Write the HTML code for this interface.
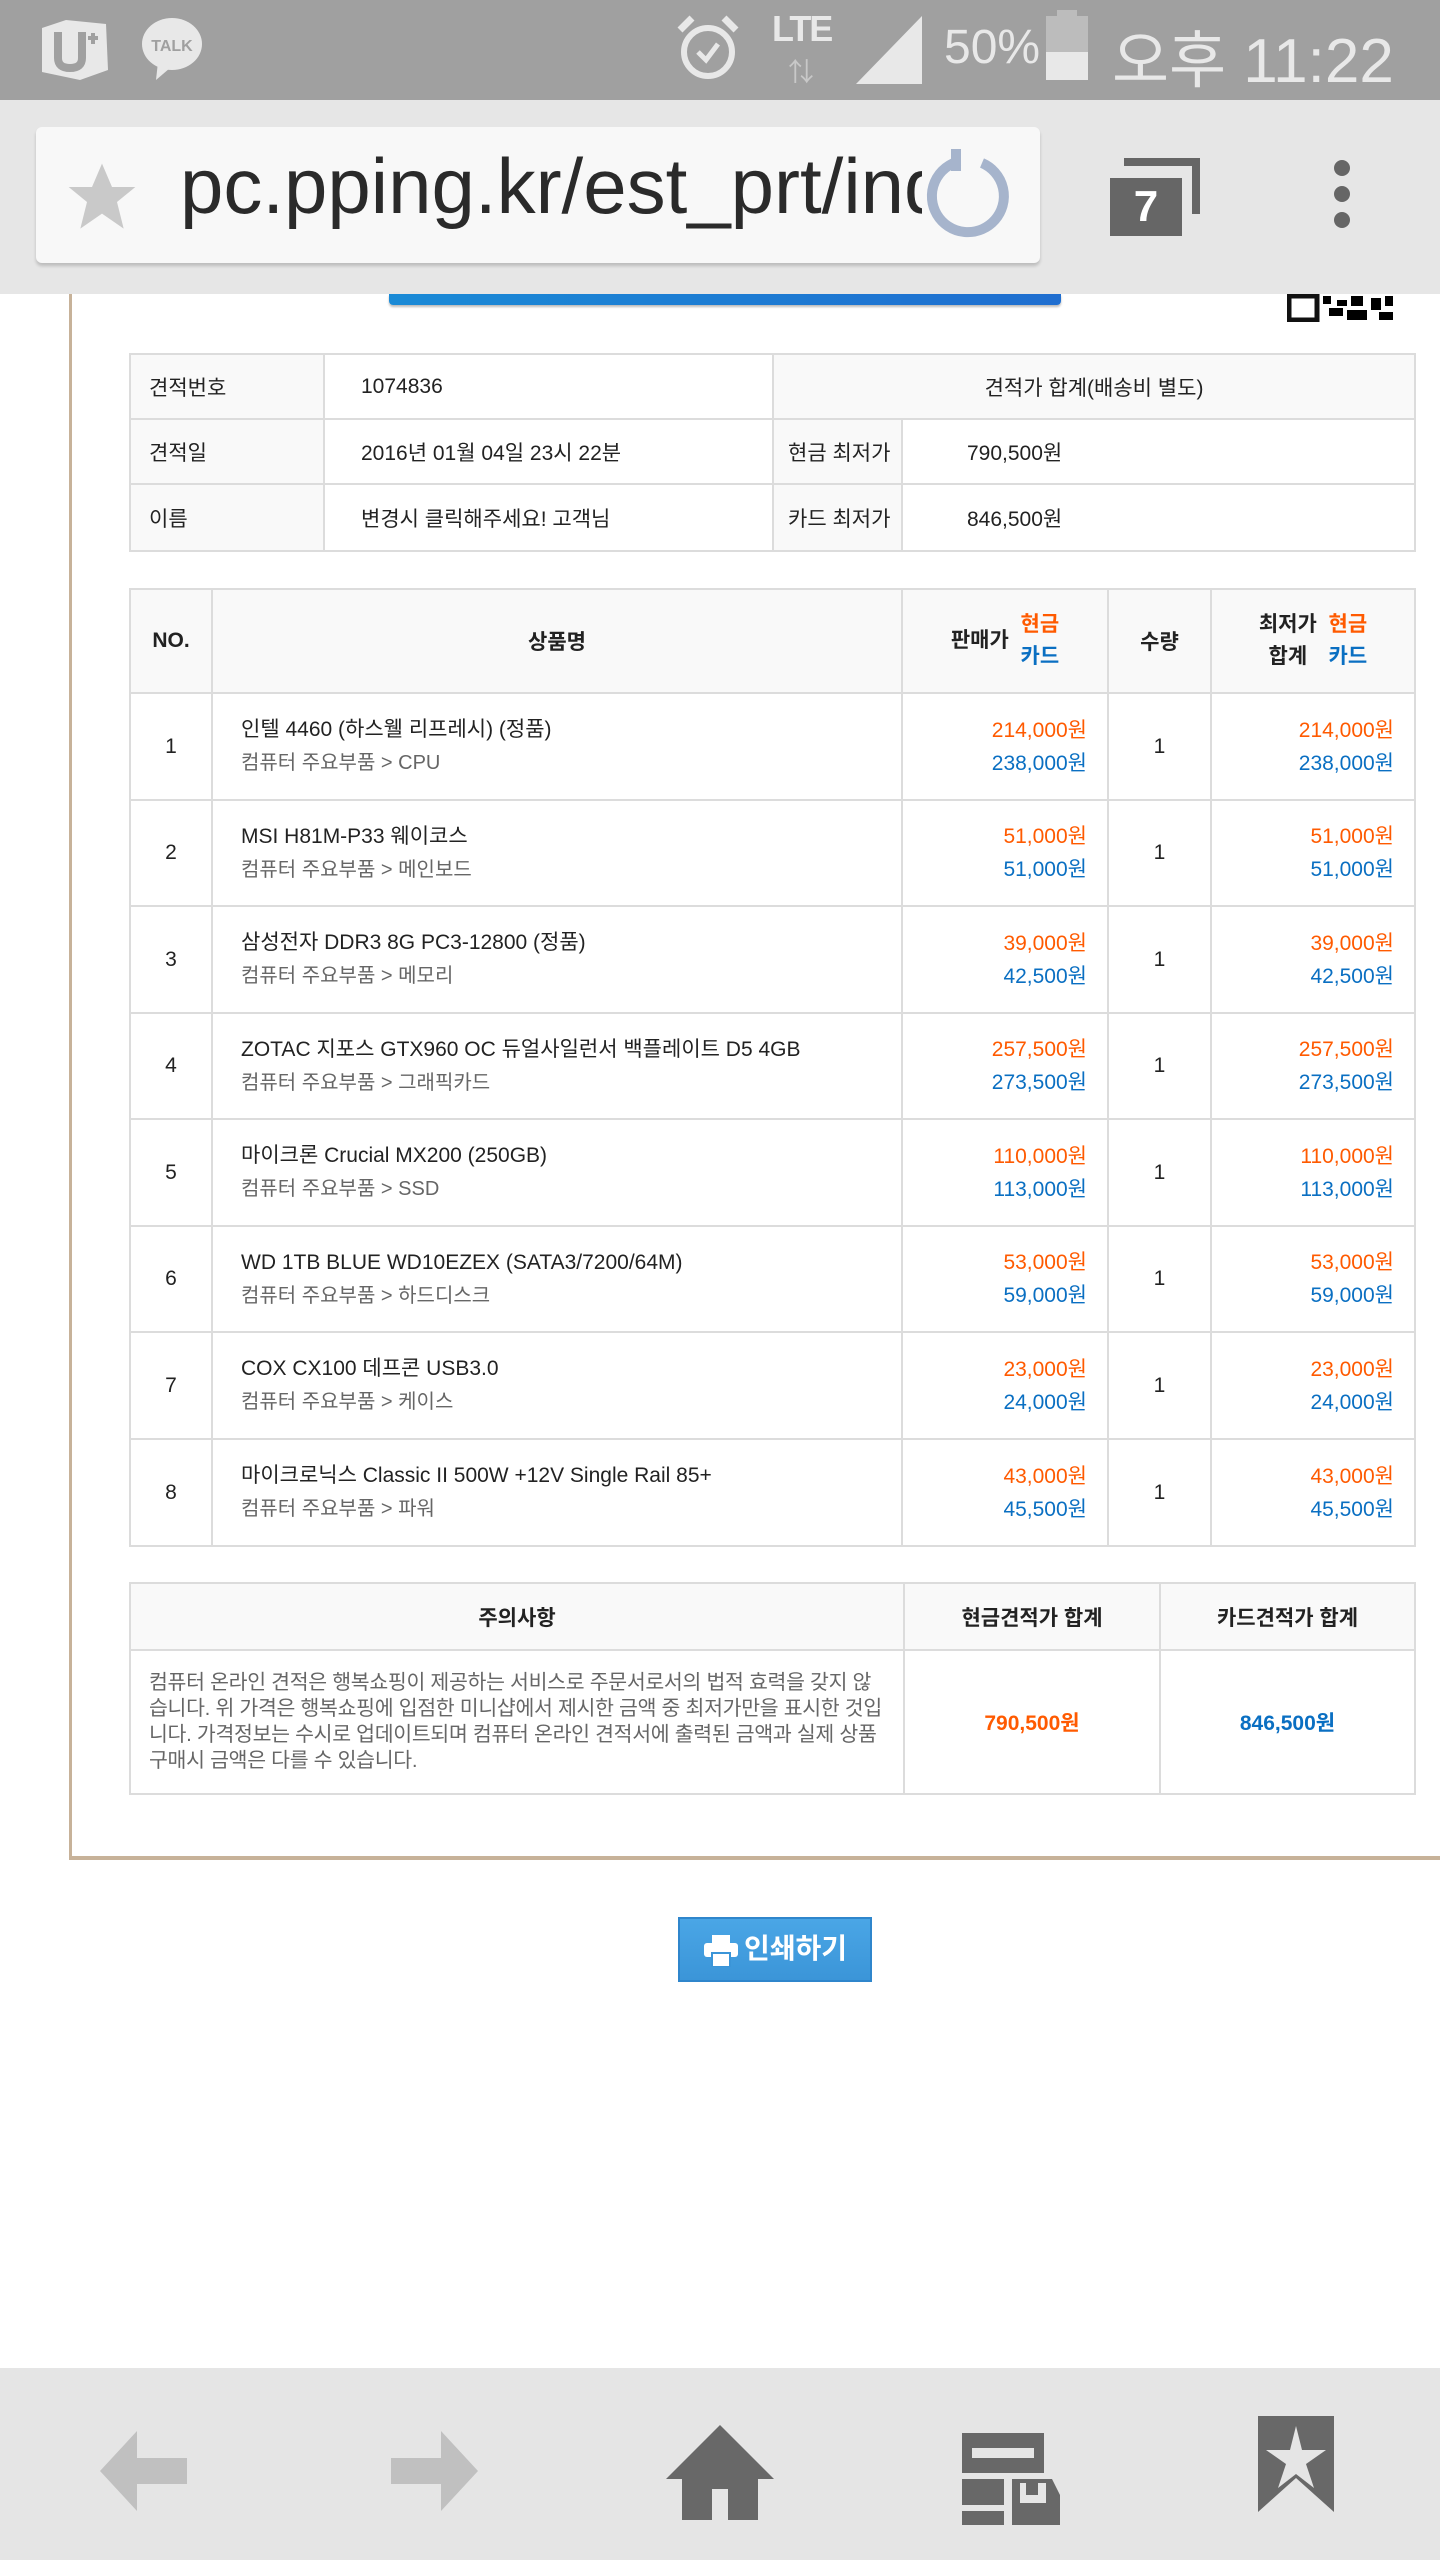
<!DOCTYPE html>
<html><head><meta charset="utf-8">
<style>
*{margin:0;padding:0;box-sizing:border-box}
body{width:1440px;height:2560px;position:relative;background:#fff;font-family:"Liberation Sans","Noto Sans CJK KR",sans-serif;overflow:hidden;color:#222}
.abs{position:absolute}
#status{left:0;top:0;width:1440px;height:100px;background:#a0a0a0}
#tool{left:0;top:100px;width:1440px;height:194px;background:#e6e6e6}
#url{left:36px;top:127px;width:1004px;height:136px;background:#f8f8f8;border-radius:6px;box-shadow:0 3px 3px rgba(0,0,0,.18)}
table{border-collapse:collapse;position:absolute;table-layout:fixed}
td{border:2px solid #dcdcdc;font-size:21px;color:#222}
.h{background:#f9f9f9}
.o{color:#ff5a00}.b{color:#0a6fc2}
.r{text-align:right;padding-right:20px}
.c{text-align:center}
.cat{color:#666;font-size:20px}
</style></head><body>
<div id="status" class="abs">
 <svg class="abs" style="left:36px;top:14px" width="80" height="70" viewBox="0 0 80 70"><path d="M6 14 L30 6 L70 10 L72 56 L44 66 L6 58Z" fill="#e8e8e8"/><path d="M22 18 V44 Q22 54 34 54 Q46 54 46 44 V18" stroke="#a0a0a0" stroke-width="8" fill="none"/><path d="M52 24 H62 M57 19 V30" stroke="#a0a0a0" stroke-width="4"/></svg>
 <svg class="abs" style="left:138px;top:16px" width="70" height="70" viewBox="0 0 70 70"><ellipse cx="34" cy="28" rx="30" ry="26" fill="#e8e8e8"/><path d="M20 46 L18 64 L32 52Z" fill="#e8e8e8"/><text x="34" y="35" font-size="16" font-weight="bold" fill="#a0a0a0" text-anchor="middle" font-family="Liberation Sans">TALK</text></svg>
 <svg class="abs" style="left:676px;top:14px" width="64" height="70" viewBox="0 0 64 70"><circle cx="32" cy="38" r="24" stroke="#e8e8e8" stroke-width="6" fill="none"/><path d="M4 16 L16 4 M60 16 L48 4" stroke="#e8e8e8" stroke-width="7"/><path d="M22 38 L30 46 L42 30" stroke="#e8e8e8" stroke-width="5" fill="none"/></svg>
 <div class="abs" style="left:772px;top:8px;font-size:36px;font-weight:bold;color:#e8e8e8;letter-spacing:-2px">LTE</div>
 <div class="abs" style="left:788px;top:52px;font-size:26px;color:#c8c8c8">⇅</div>
 <svg class="abs" style="left:856px;top:16px" width="66" height="68"><path d="M0 68 L66 0 V68Z" fill="#e8e8e8"/></svg>
 <div class="abs" style="left:944px;top:20px;font-size:48px;color:#e8e8e8">50%</div>
 <div class="abs" style="left:1046px;top:16px;width:42px;height:64px;background:#bcbcbc"></div>
 <div class="abs" style="left:1057px;top:10px;width:20px;height:8px;background:#bcbcbc"></div>
 <div class="abs" style="left:1046px;top:52px;width:42px;height:28px;background:#e8e8e8"></div>
 <div class="abs" style="left:1112px;top:10px;font-size:62px;color:#e8e8e8">오후 11:22</div>
</div>
<div id="tool" class="abs">
 <div id="url" class="abs" style="top:27px">
  <svg class="abs" style="left:26px;top:30px" width="80" height="80" viewBox="0 0 24 24"><path d="M12 2l3 7h7l-5.5 4.5 2 8L12 17l-6.5 4.5 2-8L2 9h7z" fill="#c9c9c9"/></svg>
  <div class="abs" style="left:144px;top:14px;font-size:78px;color:#2a2a2a;white-space:nowrap;width:742px;overflow:hidden">pc.pping.kr/est_prt/index</div>
  <svg class="abs" style="left:884px;top:20px" width="96" height="100" viewBox="0 0 96 100"><path d="M40 14 A36 36 0 1 0 62 16" stroke="#a6b4cc" stroke-width="10" fill="none"/><path d="M36 2 V24" stroke="#a6b4cc" stroke-width="10"/></svg>
 </div>
 <div class="abs" style="left:1124px;top:58px;width:76px;height:56px;border-top:8px solid #666;border-right:8px solid #666"></div>
 <div class="abs" style="left:1110px;top:78px;width:72px;height:58px;background:#666;color:#fff;font-size:44px;font-weight:bold;text-align:center;line-height:58px">7</div>
 <div class="abs" style="left:1334px;top:60px;width:16px;height:16px;border-radius:50%;background:#666"></div>
 <div class="abs" style="left:1334px;top:86px;width:16px;height:16px;border-radius:50%;background:#666"></div>
 <div class="abs" style="left:1334px;top:112px;width:16px;height:16px;border-radius:50%;background:#666"></div>
</div>
<div class="abs" style="left:389px;top:294px;width:672px;height:11px;background:linear-gradient(90deg,#1a8ad6,#1f6ed0);border-radius:0 0 4px 4px;box-shadow:0 2px 2px #bbb"></div>
<svg class="abs" style="left:1287px;top:294px" width="110" height="28"><rect x="2" y="2" width="28" height="24" fill="none" stroke="#111" stroke-width="5"/><rect x="36" y="2" width="8" height="8"/><rect x="50" y="6" width="10" height="6"/><rect x="42" y="14" width="14" height="8"/><rect x="64" y="2" width="12" height="10"/><rect x="60" y="16" width="20" height="10"/><rect x="84" y="4" width="10" height="12"/><rect x="92" y="18" width="14" height="8"/><rect x="98" y="2" width="8" height="10"/></svg>
<div class="abs" style="left:69px;top:294px;width:3px;height:1566px;background:#c7b299"></div>
<div class="abs" style="left:69px;top:1856px;width:1371px;height:4px;background:#c7b299"></div>

<table style="left:129px;top:353px;width:1285px">
<colgroup><col style="width:194px"><col style="width:449px"><col style="width:129px"><col style="width:513px"></colgroup>
<tr style="height:65px"><td class="h" style="padding-left:18px">견적번호</td><td style="padding-left:36px">1074836</td><td class="h c" colspan="2">견적가 합계(배송비 별도)</td></tr>
<tr style="height:65px"><td class="h" style="padding-left:18px">견적일</td><td style="padding-left:36px">2016년 01월 04일 23시 22분</td><td class="h" style="padding-left:14px">현금 최저가</td><td style="padding-left:64px">790,500원</td></tr>
<tr style="height:67px"><td class="h" style="padding-left:18px">이름</td><td style="padding-left:36px">변경시 클릭해주세요! 고객님</td><td class="h" style="padding-left:14px">카드 최저가</td><td style="padding-left:64px">846,500원</td></tr>
</table>

<table style="left:129px;top:588px;width:1285px">
<colgroup><col style="width:82px"><col style="width:690px"><col style="width:206px"><col style="width:103px"><col style="width:204px"></colgroup>
<tr style="height:104px" class="h">
<td class="h c" style="font-weight:bold">NO.</td><td class="h c" style="font-weight:bold">상품명</td>
<td class="h c" style="font-weight:bold;line-height:32px"><span style="vertical-align:middle">판매가&nbsp;&nbsp;</span><span style="display:inline-block;vertical-align:middle"><span class="o">현금</span><br><span class="b">카드</span></span></td>
<td class="h c" style="font-weight:bold">수량</td>
<td class="h c" style="font-weight:bold;line-height:32px"><span style="display:inline-block;vertical-align:middle">최저가<br>합계</span>&nbsp;&nbsp;<span style="display:inline-block;vertical-align:middle"><span class="o">현금</span><br><span class="b">카드</span></span></td>
</tr>
<tr style="height:107px"><td class="c">1</td><td style="padding-left:28px;line-height:33px">인텔 4460 (하스웰 리프레시) (정품)<br><span class="cat">컴퓨터 주요부품 &gt; CPU</span></td><td class="r" style="line-height:33px"><span class="o">214,000원</span><br><span class="b">238,000원</span></td><td class="c">1</td><td class="r" style="line-height:33px"><span class="o">214,000원</span><br><span class="b">238,000원</span></td></tr>
<tr style="height:106px"><td class="c">2</td><td style="padding-left:28px;line-height:33px">MSI H81M-P33 웨이코스<br><span class="cat">컴퓨터 주요부품 &gt; 메인보드</span></td><td class="r" style="line-height:33px"><span class="o">51,000원</span><br><span class="b">51,000원</span></td><td class="c">1</td><td class="r" style="line-height:33px"><span class="o">51,000원</span><br><span class="b">51,000원</span></td></tr>
<tr style="height:107px"><td class="c">3</td><td style="padding-left:28px;line-height:33px">삼성전자 DDR3 8G PC3-12800 (정품)<br><span class="cat">컴퓨터 주요부품 &gt; 메모리</span></td><td class="r" style="line-height:33px"><span class="o">39,000원</span><br><span class="b">42,500원</span></td><td class="c">1</td><td class="r" style="line-height:33px"><span class="o">39,000원</span><br><span class="b">42,500원</span></td></tr>
<tr style="height:106px"><td class="c">4</td><td style="padding-left:28px;line-height:33px">ZOTAC 지포스 GTX960 OC 듀얼사일런서 백플레이트 D5 4GB<br><span class="cat">컴퓨터 주요부품 &gt; 그래픽카드</span></td><td class="r" style="line-height:33px"><span class="o">257,500원</span><br><span class="b">273,500원</span></td><td class="c">1</td><td class="r" style="line-height:33px"><span class="o">257,500원</span><br><span class="b">273,500원</span></td></tr>
<tr style="height:107px"><td class="c">5</td><td style="padding-left:28px;line-height:33px">마이크론 Crucial MX200 (250GB)<br><span class="cat">컴퓨터 주요부품 &gt; SSD</span></td><td class="r" style="line-height:33px"><span class="o">110,000원</span><br><span class="b">113,000원</span></td><td class="c">1</td><td class="r" style="line-height:33px"><span class="o">110,000원</span><br><span class="b">113,000원</span></td></tr>
<tr style="height:106px"><td class="c">6</td><td style="padding-left:28px;line-height:33px">WD 1TB BLUE WD10EZEX (SATA3/7200/64M)<br><span class="cat">컴퓨터 주요부품 &gt; 하드디스크</span></td><td class="r" style="line-height:33px"><span class="o">53,000원</span><br><span class="b">59,000원</span></td><td class="c">1</td><td class="r" style="line-height:33px"><span class="o">53,000원</span><br><span class="b">59,000원</span></td></tr>
<tr style="height:107px"><td class="c">7</td><td style="padding-left:28px;line-height:33px">COX CX100 데프콘 USB3.0<br><span class="cat">컴퓨터 주요부품 &gt; 케이스</span></td><td class="r" style="line-height:33px"><span class="o">23,000원</span><br><span class="b">24,000원</span></td><td class="c">1</td><td class="r" style="line-height:33px"><span class="o">23,000원</span><br><span class="b">24,000원</span></td></tr>
<tr style="height:107px"><td class="c">8</td><td style="padding-left:28px;line-height:33px">마이크로닉스 Classic II 500W +12V Single Rail 85+<br><span class="cat">컴퓨터 주요부품 &gt; 파워</span></td><td class="r" style="line-height:33px"><span class="o">43,000원</span><br><span class="b">45,500원</span></td><td class="c">1</td><td class="r" style="line-height:33px"><span class="o">43,000원</span><br><span class="b">45,500원</span></td></tr>
</table>

<table style="left:129px;top:1582px;width:1285px">
<colgroup><col style="width:774px"><col style="width:256px"><col style="width:255px"></colgroup>
<tr style="height:67px"><td class="h c" style="font-weight:bold">주의사항</td><td class="h c" style="font-weight:bold">현금견적가 합계</td><td class="h c" style="font-weight:bold">카드견적가 합계</td></tr>
<tr style="height:144px"><td style="padding:0 18px;font-size:20.5px;color:#666;line-height:26px;letter-spacing:-0.3px">컴퓨터 온라인 견적은 행복쇼핑이 제공하는 서비스로 주문서로서의 법적 효력을 갖지 않습니다. 위 가격은 행복쇼핑에 입점한 미니샵에서 제시한 금액 중 최저가만을 표시한 것입니다. 가격정보는 수시로 업데이트되며 컴퓨터 온라인 견적서에 출력된 금액과 실제 상품 구매시 금액은 다를 수 있습니다.</td><td class="c o" style="font-weight:bold">790,500원</td><td class="c b" style="font-weight:bold">846,500원</td></tr>
</table>

<div class="abs" style="left:678px;top:1917px;width:194px;height:65px;background:linear-gradient(#4aa6e6,#3b95d8);border:2px solid #2f86cc;color:#fff;font-size:28px;font-weight:bold;line-height:60px;padding-left:64px">인쇄하기</div>
<svg class="abs" style="left:704px;top:1935px" width="34" height="32" viewBox="0 0 34 32"><rect x="8" y="0" width="18" height="8" fill="#fff"/><rect x="0" y="8" width="34" height="14" rx="3" fill="#fff"/><rect x="8" y="18" width="18" height="14" fill="#fff" stroke="#3b95d8" stroke-width="2"/></svg>

<div class="abs" style="left:0;top:2368px;width:1440px;height:192px;background:#e5e5e5">
 <svg class="abs" style="left:100px;top:63px" width="90" height="80" viewBox="0 0 90 80"><path d="M0 40 L37 0 V27 H87 V53 H37 V80Z" fill="#c0c0c0"/></svg>
 <svg class="abs" style="left:388px;top:63px" width="90" height="80" viewBox="0 0 90 80"><path d="M90 40 L53 0 V27 H3 V53 H53 V80Z" fill="#c0c0c0"/></svg>
 <svg class="abs" style="left:666px;top:57px" width="108" height="95" viewBox="0 0 108 95"><path d="M54 0 L108 54 H92 V95 H62 V64 H46 V95 H16 V54 H0Z" fill="#686868"/></svg>
 <svg class="abs" style="left:962px;top:65px" width="98" height="92" viewBox="0 0 98 92"><rect x="0" y="0" width="82" height="40" fill="#686868"/><rect x="10" y="15" width="62" height="10" fill="#e5e5e5"/><rect x="0" y="46" width="42" height="26" fill="#686868"/><rect x="0" y="78" width="42" height="14" fill="#686868"/><path d="M50 46 H90 L98 62 V92 H50Z" fill="#686868"/><rect x="58" y="50" width="26" height="20" fill="#e5e5e5"/><rect x="64" y="50" width="12" height="12" fill="#686868"/></svg>
 <svg class="abs" style="left:1258px;top:48px" width="76" height="96" viewBox="0 0 76 96"><path d="M0 0 H76 V96 L38 62 L0 96Z" fill="#686868"/><path d="M38 10 L44 34 L68 34 L48 48 L56 72 L38 58 L20 72 L28 48 L8 34 L32 34Z" fill="#e5e5e5"/></svg>
</div>
</body></html>
